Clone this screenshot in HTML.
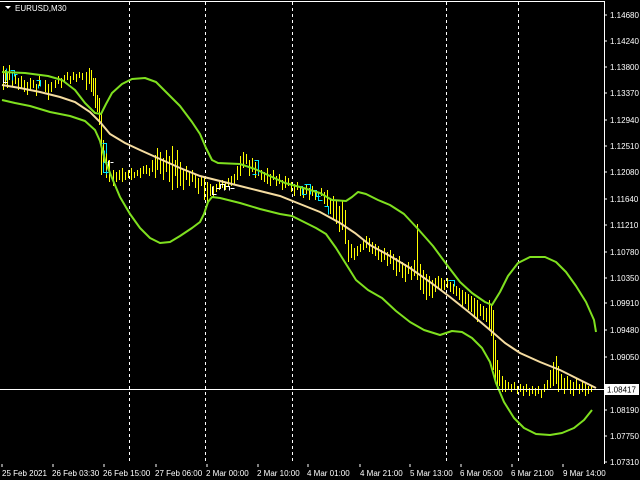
<!DOCTYPE html>
<html><head><style>
html,body{margin:0;padding:0;background:#000;width:640px;height:480px;overflow:hidden}
svg{display:block}
text{font-family:"Liberation Sans",sans-serif;font-size:8px;fill:#fff}
</style></head><body>
<svg width="640" height="480" viewBox="0 0 640 480" xmlns="http://www.w3.org/2000/svg">
<rect width="640" height="480" fill="#000"/>
<path d="M0 1.5H604.5V464" stroke="#fff" stroke-width="1" fill="none"/>
<g stroke="#fff" stroke-width="1" stroke-dasharray="3,3">
<path d="M129.5 2V463M205.5 2V463M292.5 2V463M446.5 2V463M518.5 2V463"/>
</g>
<path d="M5 6h6l-3 3z" fill="#fff"/>
<text x="15" y="11">EURUSD,M30</text>
<path transform="translate(0.5,0)" shape-rendering="crispEdges" stroke="#ffff00" stroke-width="1" fill="none" d="
M3 66V90M5 70V84M7 72V88M9 65V80M12 72V86M15 74V84M18 78V90M21 76V88M24 80V92M27 82V95M30 78V90M33 80V88M36 84V96M39 76V86
M45 80V92M48 84V100M51 82V92M55 80V88M58 76V84M61 78V88M64 75V82M67 72V80M70 76V84M73 72V80M76 74V82M79 72V78M82 73V80M86 72V90M89 68V84M91 70V92M93 78V96M95 78V108M97 95V112M99 98V125M101 112V175M103 140V170M106 150V178M109 160V182
M113 170V186M116 172V182M119 170V180M122 168V182M125 172V180M128 170V178M131 168V180M134 172V178M137 170V176M140 168V178M143 166V174M146 165V174M149 168V176M152 160V172M155 155V178M157 148V170M160 152V174M163 158V180M166 150V172M169 156V182M172 146V190M175 160V176M177 150V188M180 162V186M183 170V190M186 166V180M189 172V186M192 170V182M195 174V188M198 178V194M201 176V186
M204 178V200M207 182V204M210 184V196M213 186V198M216 184V192M219 182V190M222 180V188M225 182V190M228 178V186M231 176V186M234 174V184M237 166V180M240 156V176M243 152V168M246 154V164M249 160V176M252 158V172M255 162V178M258 166V176M261 170V180M264 172V182M267 168V184M270 174V186M273 170V180M276 176V186M279 174V184M282 180V190M285 176V188M288 178V186M291 182V192M294 184V196M297 182V190M300 186V196M303 188V198M306 184V194M309 188V200M312 186V196M315 190V200M318 192V200M321 188V196M324 192V204M327 190V206M330 198V214M333 196V220M336 200V224M339 206V232M342 200V230M345 210V244M348 240V262M351 244V258M354 248V260M357 246V256M360 244V252M363 240V250M366 236V248M369 238V252M372 242V254M375 244V256M378 246V260M381 250V262M384 248V260M387 252V266M390 250V264M393 254V270M396 258V276M399 256V272M402 262V278M405 264V282M408 262V274M411 266V280M414 260V276M417 224V280M420 264V290M423 270V294M426 274V300M429 276V296M432 280V298M435 278V292M438 276V288M441 278V290M444 280V290M447 278V288M450 282V292M453 284V294M456 286V296M459 288V300M462 290V306M465 292V304M468 294V310M471 296V312M474 298V318M477 300V322M480 304V316M483 306V320M486 308V322M489 300V330M491 304V336M493 310V370M495 340V380M497 360V390M499 370V386M502 376V392M505 380V392M508 382V390M511 384V392M514 382V390M517 386V394M520 384V392M523 386V396M526 384V392M529 388V396M532 386V394M535 388V396M538 386V394M541 390V398M544 384V392M547 380V390M550 370V388M553 362V386M556 356V384M558 366V392M561 374V390M564 378V394M567 376V390M570 380V394M573 382V396M576 378V390M579 384V394M582 382V392M585 384V396M588 386V394M591 386V392"/>
<g stroke="#00e5ff" stroke-width="1" fill="none" transform="translate(0.5,0.5)">
<path d="M4 72h8v8M6 68v12M10 70h4v6M14 74h3M36 80h4v6M38 84v4M102 143h4v10M104 150v12h3M103 162v10h5M106 170v4M254 160h4v14M252 174h4M296 186h6v8h4M304 184h6v10M312 190h4v6h4M318 194v6h4M324 206h4v8M448 280h6v6"/>
</g>
<g stroke="#fff" stroke-width="1" fill="none" transform="translate(0.5,0.5)">
<path d="M3 74v8h4M108 160v8M110 162h3M212 186v8h4M216 188h4v-4h4v6M225 186h4v4M230 188h4"/>
</g>
<g fill="none" stroke="#7fe01f" stroke-width="2" stroke-linejoin="round">
<polyline points="2,72 25,73 48,76 62,80 75,90 85,103 95,113 101,114 106,104 112,93 122,84 132,79 145,78 156,82 168,94 180,106 192,122 200,134 206,148 212,160 218,163 240,164 255,169 270,176 285,183 300,187 320,193 332,200 346,201 352,197 358,192 366,194 378,200 390,205 404,214 418,229 433,246 447,265 460,282 472,293 485,302 492,305 500,292 508,276 518,263 530,257 545,257 556,262 566,272 576,286 586,302 594,320 596,332"/>
<polyline points="2,100 15,103 30,106 50,112 70,116 85,121 95,130 100,141 105,160 112,178 120,197 130,214 140,228 150,238 160,243 170,242 180,236 192,228 200,222 204,214 208,202 212,197 220,198 240,203 260,209 280,214 292,216 304,222 316,228 326,234 336,248 346,264 356,280 368,290 382,298 396,311 410,322 424,330 440,335 452,331 462,332 472,338 482,348 490,362 496,383 504,402 514,418 524,428 536,434 550,435 562,433 574,428 584,420 592,410"/>
</g>
<polyline fill="none" stroke="#f5dca0" stroke-width="2" points="2,85 20,88 40,92 60,97 75,102 90,112 100,122 110,134 125,143 140,150 160,159 180,168 200,176 220,181 240,186 260,191 280,196 300,204 320,212 340,223 355,233 370,245 390,256 410,268 430,282 450,297 470,313 490,330 505,343 520,353 540,362 560,370 580,380 596,388"/>
<path d="M0 389.5H604" stroke="#fff"/>
<rect x="605" y="384" width="34" height="11" fill="#fff"/>
<text x="607" y="392.5" style="fill:#000">1.08417</text>
<g stroke="#fff"><path d="M604 15h3M604 41h3M604 67h3M604 93h3M604 120h3M604 146h3M604 172h3M604 199h3M604 225h3M604 252h3M604 278h3M604 303h3M604 330h3M604 357h3M604 410h3M604 436h3M604 462h3"/></g>
<g>
<text x="610" y="18">1.14680</text><text x="610" y="44">1.14240</text><text x="610" y="70">1.13800</text><text x="610" y="96">1.13370</text><text x="610" y="123">1.12940</text><text x="610" y="149">1.12510</text><text x="610" y="175">1.12080</text><text x="610" y="202">1.11640</text><text x="610" y="228">1.11210</text><text x="610" y="255">1.10780</text><text x="610" y="281">1.10350</text><text x="610" y="306">1.09910</text><text x="610" y="333">1.09480</text><text x="610" y="360">1.09050</text><text x="610" y="413">1.08190</text><text x="610" y="439">1.07750</text><text x="610" y="465">1.07310</text>
</g>
<g stroke="#fff"><path d="M2 464v3M53 464v3M104 464v3M156 464v3M207 464v3M258 464v3M308 464v3M360 464v3M410 464v3M461 464v3M512 464v3M563 464v3"/></g>
<g>
<text x="2" y="476">25 Feb 2021</text><text x="52" y="476">26 Feb 03:30</text><text x="103" y="476">26 Feb 15:00</text><text x="155" y="476">27 Feb 06:00</text><text x="206" y="476">2 Mar 00:00</text><text x="257" y="476">2 Mar 10:00</text><text x="307" y="476">4 Mar 01:00</text><text x="360" y="476">4 Mar 21:00</text><text x="410" y="476">5 Mar 13:00</text><text x="460" y="476">6 Mar 05:00</text><text x="511" y="476">6 Mar 21:00</text><text x="563" y="476">9 Mar 14:00</text>
</g>
</svg>
</body></html>
